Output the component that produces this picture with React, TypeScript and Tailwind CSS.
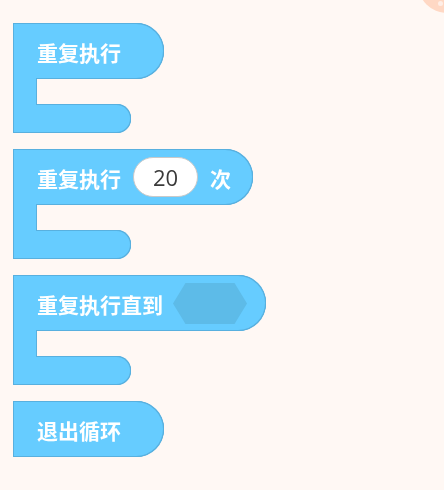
import React from "react";

const outline =
  "[filter:drop-shadow(1px_0_0_#58b0df)_drop-shadow(-1px_0_0_#58b0df)_drop-shadow(0_1px_0_#58b0df)_drop-shadow(0_-1px_0_#58b0df)]";

const label =
  "text-white font-semibold text-[21px] leading-none whitespace-nowrap pt-[3px] [font-family:'Noto_Sans_CJK_SC','Noto_Sans',sans-serif]";

function CBlock({
  width,
  children,
}: {
  width: number;
  children: React.ReactNode;
}) {
  return (
    <div className={`flex flex-col items-start ${outline}`}>
      <div
        className="h-[54px] bg-[#66ccff] rounded-tl-[4px] rounded-r-full flex items-center pl-[23px] gap-[12px]"
        style={{ width }}
      >
        {children}
      </div>
      <div className="w-[22px] h-[27px] bg-[#66ccff]" />
      <div className="w-[116px] h-[27px] bg-[#66ccff] rounded-bl-[4px] rounded-r-full" />
    </div>
  );
}

export default function App() {
  return (
    <div className="relative min-h-[490px] w-full overflow-hidden bg-[#fff8f4] pl-[14px] pt-[24px]">
      <div className="absolute left-[418px] top-[-45px] w-[58px] h-[58px] rounded-full bg-[#ffd8c4]">
        <div className="absolute left-[20px] top-[46px] w-[5px] h-[5px] rounded-full bg-[#ffeee6]" />
      </div>
      <div className="flex flex-col items-start gap-[18px]">
        <CBlock width={149}>
          <span className={label}>重复执行</span>
        </CBlock>

        <CBlock width={238}>
          <span className={label}>重复执行</span>
          <div className="w-[65px] h-[40px] rounded-full bg-white border border-[#c9c9c9] flex items-center justify-center text-[#3a3a3a] text-[22px] [font-family:'Open_Sans','Noto_Sans',sans-serif]">
            20
          </div>
          <span className={label}>次</span>
        </CBlock>

        <CBlock width={251}>
          <span className={`${label} -mr-[2px]`}>重复执行直到</span>
          <svg width="74" height="41" viewBox="0 0 74 41" className="block">
            <polygon points="0,20.5 12.5,0 61.5,0 74,20.5 61.5,41 12.5,41" fill="#5dbbe8" />
          </svg>
        </CBlock>

        <div className={outline}>
          <div className="w-[149px] h-[54px] bg-[#66ccff] rounded-l-[4px] rounded-r-full flex items-center pl-[23px]">
            <span className={label}>退出循环</span>
          </div>
        </div>
      </div>
    </div>
  );
}
